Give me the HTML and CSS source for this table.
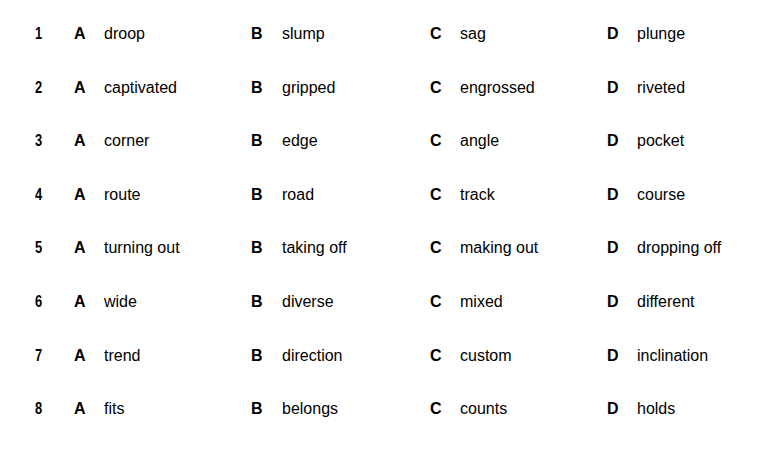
FILE: index.html
```html
<!DOCTYPE html>
<html lang="en">
<head>
<meta charset="utf-8">
<title>Options</title>
<link rel="stylesheet" href="styles.css">
</head>
<body>
<div class="sheet">
  <div class="row"><span class="num">1</span><b class="opt">A</b><span class="word">droop</span><b class="opt">B</b><span class="word">slump</span><b class="opt">C</b><span class="word">sag</span><b class="opt">D</b><span class="word">plunge</span></div>
  <div class="row"><span class="num">2</span><b class="opt">A</b><span class="word">captivated</span><b class="opt">B</b><span class="word">gripped</span><b class="opt">C</b><span class="word">engrossed</span><b class="opt">D</b><span class="word">riveted</span></div>
  <div class="row"><span class="num">3</span><b class="opt">A</b><span class="word">corner</span><b class="opt">B</b><span class="word">edge</span><b class="opt">C</b><span class="word">angle</span><b class="opt">D</b><span class="word">pocket</span></div>
  <div class="row"><span class="num">4</span><b class="opt">A</b><span class="word">route</span><b class="opt">B</b><span class="word">road</span><b class="opt">C</b><span class="word">track</span><b class="opt">D</b><span class="word">course</span></div>
  <div class="row"><span class="num">5</span><b class="opt">A</b><span class="word">turning out</span><b class="opt">B</b><span class="word">taking off</span><b class="opt">C</b><span class="word">making out</span><b class="opt">D</b><span class="word">dropping off</span></div>
  <div class="row"><span class="num">6</span><b class="opt">A</b><span class="word">wide</span><b class="opt">B</b><span class="word">diverse</span><b class="opt">C</b><span class="word">mixed</span><b class="opt">D</b><span class="word">different</span></div>
  <div class="row"><span class="num">7</span><b class="opt">A</b><span class="word">trend</span><b class="opt">B</b><span class="word">direction</span><b class="opt">C</b><span class="word">custom</span><b class="opt">D</b><span class="word">inclination</span></div>
  <div class="row"><span class="num">8</span><b class="opt">A</b><span class="word">fits</span><b class="opt">B</b><span class="word">belongs</span><b class="opt">C</b><span class="word">counts</span><b class="opt">D</b><span class="word">holds</span></div>
</div>
</body>
</html>
```
FILE: styles.css
```css
html, body {
  margin: 0;
  padding: 0;
  background: #ffffff;
}
body {
  font-family: "Liberation Sans", Arial, sans-serif;
  font-size: 16px;
  color: #000000;
}
.sheet {
  padding: 7px 0 0 35px;
}
.row {
  display: grid;
  grid-template-columns: 39px 30px 147px 31px 148px 30px 147px 30px 1fr;
  height: 53.6px;
  line-height: 53.6px;
  white-space: nowrap;
}
.num {
  font-size: 17px;
  font-weight: bold;
  display: inline-block;
  transform: scaleX(0.76);
  transform-origin: left center;
}
.opt {
  font-weight: bold;
}
.word {
  font-weight: normal;
}
```
